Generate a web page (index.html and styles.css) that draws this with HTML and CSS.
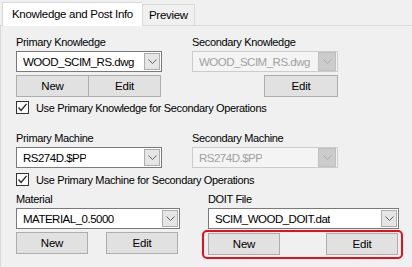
FILE: index.html
```html
<!DOCTYPE html>
<html lang="en">
<head>
  <meta charset="UTF-8" />
  <title>Knowledge and Post Info</title>
  <link rel="stylesheet" href="styles.css">
</head>
<body>
  <div class="tabs">
    <div class="tab active">Knowledge and Post Info</div>
    <div class="tab">Preview</div>
  </div>

  <div class="panel">
    <div class="pair">
      <div class="field">
        <div class="label">Primary Knowledge</div>
        <div class="combo narrow">
          <span class="value">WOOD_SCIM_RS.dwg</span>
          <span class="drop"><svg width="9" height="5" viewBox="0 0 9 5"><polyline points="0.5,0.5 4.5,4.5 8.5,0.5" /></svg></span>
        </div>
        <div class="buttons joined">
          <button>New</button>
          <button>Edit</button>
        </div>
      </div>
      <div class="field">
        <div class="label">Secondary Knowledge</div>
        <div class="combo narrow disabled">
          <span class="value">WOOD_SCIM_RS.dwg</span>
          <span class="drop"><svg width="9" height="5" viewBox="0 0 9 5"><polyline points="0.5,0.5 4.5,4.5 8.5,0.5" /></svg></span>
        </div>
        <div class="buttons end">
          <button>Edit</button>
        </div>
      </div>
    </div>

    <div class="check">
      <span class="box"><svg width="11" height="11" viewBox="0 0 11 11"><polyline points="1.5,5.5 4,8.5 9.5,2" /></svg></span>
      Use Primary Knowledge for Secondary Operations
    </div>

    <div class="pair machine">
      <div class="field">
        <div class="label">Primary Machine</div>
        <div class="combo narrow">
          <span class="value">RS274D.$PP</span>
          <span class="drop"><svg width="9" height="5" viewBox="0 0 9 5"><polyline points="0.5,0.5 4.5,4.5 8.5,0.5" /></svg></span>
        </div>
      </div>
      <div class="field">
        <div class="label">Secondary Machine</div>
        <div class="combo narrow disabled">
          <span class="value">RS274D.$PP</span>
          <span class="drop"><svg width="9" height="5" viewBox="0 0 9 5"><polyline points="0.5,0.5 4.5,4.5 8.5,0.5" /></svg></span>
        </div>
      </div>
    </div>

    <div class="check second">
      <span class="box"><svg width="11" height="11" viewBox="0 0 11 11"><polyline points="1.5,5.5 4,8.5 9.5,2" /></svg></span>
      Use Primary Machine for Secondary Operations
    </div>

    <div class="pair files">
      <div class="field material">
        <div class="label">Material</div>
        <div class="combo">
          <span class="value">MATERIAL_0.5000</span>
          <span class="drop"><svg width="9" height="5" viewBox="0 0 9 5"><polyline points="0.5,0.5 4.5,4.5 8.5,0.5" /></svg></span>
        </div>
        <div class="buttons">
          <button>New</button>
          <button>Edit</button>
        </div>
      </div>
      <div class="field doit">
        <div class="label">DOIT File</div>
        <div class="combo">
          <span class="value">SCIM_WOOD_DOIT.dat</span>
          <span class="drop"><svg width="9" height="5" viewBox="0 0 9 5"><polyline points="0.5,0.5 4.5,4.5 8.5,0.5" /></svg></span>
        </div>
        <div class="highlight">
          <div class="buttons">
            <button>New</button>
            <button>Edit</button>
          </div>
        </div>
      </div>
    </div>
  </div>
</body>
</html>
```

FILE: styles.css
```css
body {
  margin: 0;
  background: #f0f0f0;
  font-family: "Liberation Sans", Arial, sans-serif;
  font-size: 11px;
  letter-spacing: -0.35px;
  color: #000;
}
.tabs {
  display: flex;
  align-items: flex-end;
  height: 25px;
  padding-left: 2px;
  border-bottom: 1px solid #d9d9d9;
  font-size: 11.5px;
  letter-spacing: -0.3px;
}
.tab {
  height: 20px;
  line-height: 20px;
  padding: 0 6px;
  border: 1px solid #d9d9d9;
  border-bottom: none;
  background: #f0f0f0;
}
.tab.active {
  height: 23px;
  line-height: 22px;
  padding: 0 9px;
  background: #fff;
  margin-bottom: -1px;
  border-right: none;
}
.panel {
  border-left: 1px solid #d9d9d9;
  padding: 9px 0 0 15px;
  height: 240px;
}
.pair {
  display: grid;
  grid-template-columns: 176px 1fr;
}
.label {
  height: 15px;
  line-height: 15px;
}
.combo {
  display: flex;
  align-items: center;
  justify-content: space-between;
  height: 19px;
  margin-top: 1px;
  border: 1px solid #7a7a7a;
  background: #fff;
  padding: 0 1px 0 6px;
}
.combo.narrow {
  width: 137px;
}
.combo .value {
  font-size: 11.5px;
  letter-spacing: -0.5px;
  white-space: nowrap;
  overflow: hidden;
}
.drop {
  display: flex;
  flex-shrink: 0;
  align-items: center;
  justify-content: center;
  width: 14px;
  height: 15px;
  border: 1px solid #adadad;
  background: #e5e5e5;
}
.drop polyline {
  fill: none;
  stroke: #606060;
  stroke-width: 1;
}
.combo.disabled {
  border-color: #cccccc;
  background: #f4f4f4;
  color: #a0a0a0;
}
.combo.disabled .drop {
  width: 16px;
  height: 17px;
  margin-right: 0;
  background: #cccccc;
  border-color: #bfbfbf;
}
.combo.disabled .drop polyline {
  stroke: #a8a8a8;
}
.buttons {
  display: flex;
  justify-content: space-between;
  margin-top: 3px;
}
button {
  height: 22px;
  width: 72px;
  padding: 0;
  border: 1px solid #adadad;
  background: #e1e1e1;
  font-family: inherit;
  font-size: 11.5px;
  letter-spacing: -0.2px;
  color: #000;
}
.buttons.joined {
  width: 145px;
  justify-content: flex-start;
}
.buttons.joined button {
  width: 73px;
}
.buttons.joined button + button {
  margin-left: -1px;
}
.buttons.end {
  width: 146px;
  justify-content: flex-end;
}
.buttons.end button {
  width: 74px;
}
.check {
  display: flex;
  align-items: center;
  gap: 7px;
  height: 13px;
  margin-top: 4px;
}
.check.second {
  margin-top: 5px;
}
.box {
  display: flex;
  align-items: center;
  justify-content: center;
  width: 11px;
  height: 11px;
  border: 1px solid #333;
  background: #fff;
}
.box polyline {
  fill: none;
  stroke: #222;
  stroke-width: 1.2;
}
.machine {
  margin-top: 17px;
}
.files {
  grid-template-columns: 192px 1fr;
  margin-top: 6px;
}
.material .combo {
  width: 155px;
}
.material .buttons {
  width: 162px;
}
.doit .combo {
  width: 182px;
}
.doit .buttons {
  width: 190px;
  margin-top: 0;
}
.highlight {
  margin: 1px 0 0 -6px;
  width: 190px;
  padding: 1px 3px 2px 4px;
  border: 2px solid #e3101e;
  border-radius: 5px;
}
```
